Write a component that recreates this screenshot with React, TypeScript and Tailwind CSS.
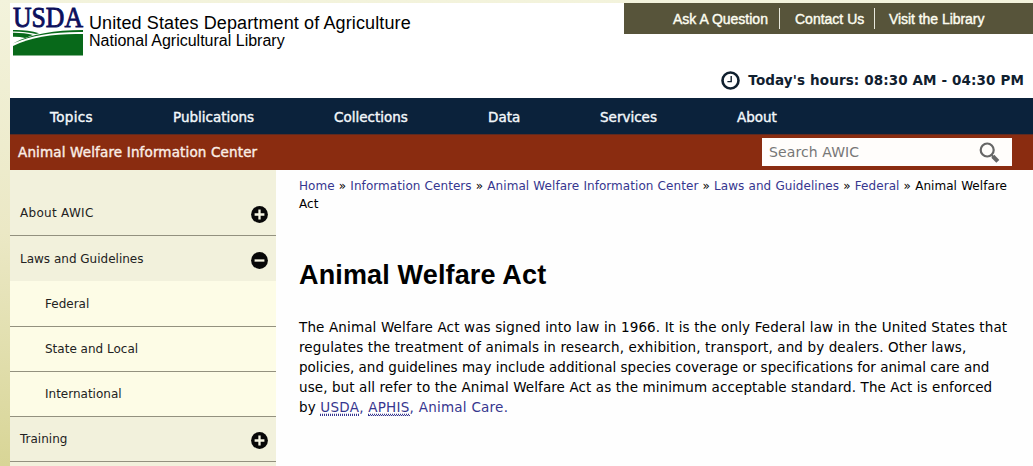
import { clsx } from 'clsx'

const navItems = [
  { label: 'Topics', width: 'w-[43px] tracking-[0.3px]' },
  { label: 'Publications', width: 'w-[81px]' },
  { label: 'Collections', width: 'w-[74px]' },
  { label: 'Data', width: 'w-[32px]' },
  { label: 'Services', width: 'w-[57px]' },
  { label: 'About', width: 'w-[40px]' },
]

const crumbs = ['Home', 'Information Centers', 'Animal Welfare Information Center', 'Laws and Guidelines', 'Federal']

function UsdaLogo() {
  return (
    <svg width="71" height="51" viewBox="0 0 71 51" className="shrink-0 overflow-visible">
      <text
        x="0"
        y="21.8"
        fontSize="30"
        textLength="70"
        lengthAdjust="spacingAndGlyphs"
        fill="#0b0f5c"
        stroke="#0b0f5c"
        strokeWidth="0.9"
        className="font-['Liberation_Serif',serif]"
      >
        USDA
      </text>
      <g fill="#08691a">
        <path d="M0 25c9-.3 18 .8 26 3.2l-3 .9C16 27.2 8 26.3 0 26.4z" />
        <path d="M0 27.8c7-.1 14 .7 20 2.3l-8 3C8 32 4 31.6 0 31.8z" />
        <path d="M0 38.4C18 29 42 25 70 25v2C43 26.6 19 30 0 38.4z" />
        <path d="M0 41C19 31.5 43 28.3 70 29v21.6H0z" />
      </g>
    </svg>
  )
}

function ToggleIcon({ open }: { open?: boolean }) {
  return (
    <svg width="17" height="17" viewBox="0 0 17 17">
      <circle cx="8.5" cy="8.5" r="8.4" fill="#080808" />
      <path d={open ? 'M3.6 8.5h9.8' : 'M3.6 8.5h9.8M8.5 3.6v9.8'} stroke="#f6f5e2" strokeWidth="2.3" />
    </svg>
  )
}

function SideRow({ label, open, first }: { label: string; open?: boolean; first?: boolean }) {
  return (
    <div
      className={clsx(
        'flex items-center justify-between bg-[#f2f1dc] pr-2 pl-2.5',
        first ? 'h-[66px] border-b border-[#93917f] pt-5' : 'h-[45px]',
        !first && !open && 'border-b border-[#93917f]',
      )}
    >
      <span className={clsx('text-[12px]', first ? 'tracking-[0.3px]' : 'tracking-normal')}>{label}</span>
      <span className="pt-[3px]"><ToggleIcon open={open} /></span>
    </div>
  )
}

function SubRow({ label }: { label: string }) {
  return (
    <div className="flex h-[45px] shrink-0 items-center border-b border-[#93917f] bg-[#fdfce6] pl-[35px] text-[12px]">
      {label}
    </div>
  )
}

export default function App() {
  return (
    <div className="h-[466px] w-[1033px] overflow-hidden bg-linear-to-b from-[#f3f3dc] via-[#ebe8c5] to-[#d8d596] pt-[3px] pl-2.5 font-['DejaVu_Sans',sans-serif] text-[#111]">
      <div className="h-full bg-[#fefefe]">
        <header className="flex h-[95px] justify-between bg-white">
          <div className="flex pt-0.5 pl-[3px]">
            <UsdaLogo />
            <div className="pt-2 pl-[5px] font-['Liberation_Sans',sans-serif] whitespace-nowrap text-black">
              <p className="text-[18px] leading-5 tracking-[0.12px]">United States Department of Agriculture</p>
              <p className="text-[16px] leading-[15px]">National Agricultural Library</p>
            </div>
          </div>
          <div className="w-[409px]">
            <div className="flex h-[31px] items-center bg-[#57543a] pt-0.5 pl-[49px] font-['Liberation_Sans',sans-serif] text-[14px] whitespace-nowrap text-[#fdfdf0] [-webkit-text-stroke:0.4px]">
              <a className="w-[97px]">Ask A Question</a>
              <i className="mr-[15px] ml-[9px] -mt-0.5 h-[21px] w-px bg-[#e8e8dc]" />
              <a className="w-[70px]">Contact Us</a>
              <i className="mr-3.5 ml-[9px] -mt-0.5 h-[21px] w-px bg-[#e8e8dc]" />
              <a className="tracking-[-0.05px]">Visit the Library</a>
            </div>
            <div className="flex items-center justify-end gap-2 pt-[35px] pr-[9px] text-[#10202f]">
              <svg width="19" height="19" viewBox="0 0 19 19" fill="none" stroke="currentColor" className="mt-0.5">
                <circle cx="9.5" cy="9.5" r="8" strokeWidth="2.6" />
                <path d="M10.2 5v5.6H6.4" strokeWidth="1.4" />
              </svg>
              <span className="text-[13.5px] leading-5 font-bold tracking-[0.12px] whitespace-nowrap">Today's hours: 08:30 AM - 04:30 PM</span>
            </div>
          </div>
        </header>

        <nav className="flex h-9 items-center gap-20 bg-[#0b223b] pt-[3px] pl-10 text-[13.5px] whitespace-nowrap text-[#f3f8fb] [-webkit-text-stroke:0.4px]">
          {navItems.map((item) => (
            <a key={item.label} className={item.width}>{item.label}</a>
          ))}
        </nav>

        <div className="flex h-9 items-center justify-between border-t border-[#5f2a20] bg-[#8a2c10] pr-[21px] pl-2">
          <span className="text-[13.5px] tracking-[0.15px] whitespace-nowrap text-[#fbeee6] [-webkit-text-stroke:0.4px]">
            Animal Welfare Information Center
          </span>
          <div className="-mt-px flex h-7 w-[250px] items-center justify-between bg-[#fffdfb] pr-3 pl-[7px] text-[14px] text-[#777]">
            <span className="tracking-[0.1px]">Search AWIC</span>
            <svg width="21" height="22" viewBox="0 0 21 22" fill="none" stroke="#666" className="mt-0.5">
              <circle cx="8.2" cy="8" r="6.5" strokeWidth="2.2" />
              <path d="M12.8 13.2l1.4 1.4" strokeWidth="2" />
              <path d="M13.8 14.2l5 5.2" strokeWidth="4.2" />
            </svg>
          </div>
        </div>

        <div className="flex">
          <aside className="w-[266px] shrink-0 text-[#222]">
            <SideRow label="About AWIC" first />
            <SideRow label="Laws and Guidelines" open />
            <div className="bg-[#fdfce6] pt-px">
              <SubRow label="Federal" />
              <SubRow label="State and Local" />
              <SubRow label="International" />
            </div>
            <SideRow label="Training" />
            <div className="h-5 bg-[#f2f1dc]" />
          </aside>

          <main className="pt-[7px] pl-[23px] text-black">
            <p className="w-[730px] text-[12px] leading-[18px] tracking-[0.06px] [word-spacing:0.25px]">
              {crumbs.map((crumb) => (
                <span key={crumb}>
                  <a className="text-[#36368f]">{crumb}</a> »{' '}
                </span>
              ))}
              Animal Welfare
              <br />
              Act
            </p>
            <h1 className="mt-[46px] font-['Liberation_Sans',sans-serif] text-[27px] leading-8 font-bold tracking-[0.15px]">
              Animal Welfare Act
            </h1>
            <p className="mt-[26px] text-[13.5px] leading-5 tracking-[0.135px] whitespace-nowrap">
              The Animal Welfare Act was signed into law in 1966. It is the only Federal law in the United States that
              <br />
              <span className="tracking-[0.115px]">
                regulates the treatment of animals in research, exhibition, transport, and by dealers. Other laws,
              </span>
              <br />
              <span className="tracking-[0.015px]">
                policies, and guidelines may include additional species coverage or specifications for animal care and
              </span>
              <br />
              <span className="tracking-[0.095px]">
                use, but all refer to the Animal Welfare Act as the minimum acceptable standard. The Act is enforced
              </span>
              <br />
              by{' '}
              <span className="tracking-[0.25px] text-[#36368f]">
                <a className="border-b border-dotted border-current underline decoration-dotted underline-offset-2">USDA</a>,{' '}
                <a className="border-b border-dotted border-current underline decoration-dotted underline-offset-2">APHIS</a>,{' '}
                <a>Animal Care.</a>
              </span>
            </p>
          </main>
        </div>
      </div>
    </div>
  )
}
